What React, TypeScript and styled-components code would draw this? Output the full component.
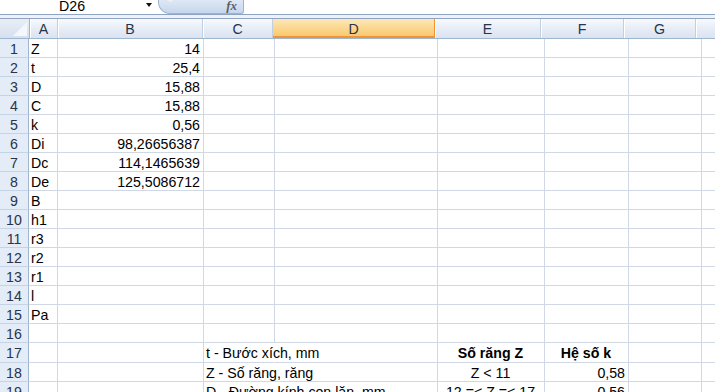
import React from 'react'
import styled, { createGlobalStyle } from 'styled-components'

const GlobalStyle = createGlobalStyle`
    html, body {
        margin: 0;
        padding: 0;
        background: #fff;
        overflow: hidden;
    }
    body {
        font-family: "Liberation Sans", Arial, sans-serif;
    }
`

type Align = 'left' | 'right' | 'center'

interface CellData {
    text?: string
    align?: Align
    bold?: boolean
    spill?: boolean
}

// column widths include the right gridline
const COLS = ['A', 'B', 'C', 'D', 'E', 'F', 'G', 'H']
const COL_WIDTHS = [30, 29, 146, 71, 163, 107, 84, 73, 100]
const SELECTED_COL = 'D'

const L = (text: string): CellData => ({ text, align: 'left' })
const R = (text: string): CellData => ({ text, align: 'right' })

const rows: { height: number; cells: Record<string, CellData> }[] = [
    { height: 19, cells: { A: L('Z'), B: R('14') } },
    { height: 19, cells: { A: L('t'), B: R('25,4') } },
    { height: 19, cells: { A: L('D'), B: R('15,88') } },
    { height: 19, cells: { A: L('C'), B: R('15,88') } },
    { height: 19, cells: { A: L('k'), B: R('0,56') } },
    { height: 19, cells: { A: L('Di'), B: R('98,26656387') } },
    { height: 19, cells: { A: L('Dc'), B: R('114,1465639') } },
    { height: 19, cells: { A: L('De'), B: R('125,5086712') } },
    { height: 19, cells: { A: L('B') } },
    { height: 19, cells: { A: L('h1') } },
    { height: 19, cells: { A: L('r3') } },
    { height: 19, cells: { A: L('r2') } },
    { height: 19, cells: { A: L('r1') } },
    { height: 19, cells: { A: L('l') } },
    { height: 19, cells: { A: L('Pa') } },
    { height: 19, cells: {} },
    {
        height: 20,
        cells: {
            C: { text: 't - Bước xích, mm', align: 'left', spill: true },
            E: { text: 'Số răng Z', align: 'center', bold: true },
            F: { text: 'Hệ số k', align: 'center', bold: true },
        },
    },
    {
        height: 19,
        cells: {
            C: { text: 'Z - Số răng, răng', align: 'left', spill: true },
            E: { text: 'Z < 11', align: 'center' },
            F: R('0,58'),
        },
    },
    {
        height: 19,
        cells: {
            C: { text: 'D - Đường kính con lăn, mm', align: 'left', spill: true },
            E: { text: '12 =< Z =< 17', align: 'center' },
            F: R('0,56'),
        },
    },
]

const App: React.FC = () => {
    return (
        <Window>
            <GlobalStyle />
            <FormulaBar>
                <NameBox>
                    <NameText>D26</NameText>
                    <DropArrow />
                </NameBox>
                <FxPill>
                    <PillKnob />
                    <FxLabel>fx</FxLabel>
                </FxPill>
                <FormulaInput />
            </FormulaBar>
            <Gap />
            <Sheet>
                <HeaderRow>
                    <Corner>
                        <CornerTriangle />
                    </Corner>
                    {COLS.map((c, i) => (
                        <ColHeader key={c} $w={COL_WIDTHS[i + 1]} $selected={c === SELECTED_COL}>
                            {c}
                        </ColHeader>
                    ))}
                    <ColHeader $w={COL_WIDTHS[COL_WIDTHS.length - 1]} $selected={false} />
                </HeaderRow>
                {rows.map((row, r) => (
                    <Row key={r} $h={row.height}>
                        <RowHeader>{r + 1}</RowHeader>
                        {COLS.map((c, i) => {
                            const cell = row.cells[c]
                            return (
                                <Cell
                                    key={c}
                                    $w={COL_WIDTHS[i + 1]}
                                    $align={cell?.align ?? 'left'}
                                    $bold={!!cell?.bold}
                                    $spill={!!cell?.spill}
                                >
                                    {cell?.text}
                                </Cell>
                            )
                        })}
                        <Cell $w={COL_WIDTHS[COL_WIDTHS.length - 1]} $align="left" $bold={false} $spill={false} />
                    </Row>
                ))}
            </Sheet>
        </Window>
    )
}

export default App

const Window = styled.div`
    width: 715px;
    height: 392px;
    overflow: hidden;
    background: #fff;
    display: flex;
    flex-direction: column;
`

const FormulaBar = styled.div`
    height: 14px;
    flex: none;
    display: flex;
    align-items: stretch;
    border-bottom: 1px solid #8ea4c0;
    background: #fff;
`

const NameBox = styled.div`
    width: 158px;
    flex: none;
    position: relative;
    display: flex;
    align-items: center;
`

const NameText = styled.span`
    margin-left: 59px;
    margin-top: -3px;
    font-size: 14.2px;
    color: #000;
`

const DropArrow = styled.div`
    position: absolute;
    left: 146px;
    top: 3px;
    width: 0;
    height: 0;
    border-left: 3.5px solid transparent;
    border-right: 3.5px solid transparent;
    border-top: 4px solid #111;
`

const FxPill = styled.div`
    width: 84px;
    flex: none;
    position: relative;
    margin-top: -12px;
    border: 1px solid #9fb3cd;
    border-top: none;
    border-radius: 0 0 3px 12px;
    background: linear-gradient(to bottom, #eef3fa, #d9e4f3 60%, #c6d6ed);
    display: flex;
    align-items: flex-end;
    justify-content: flex-end;
`

const PillKnob = styled.div`
    position: absolute;
    left: 4px;
    top: 1px;
    width: 13px;
    height: 13px;
    border-radius: 50%;
    background: radial-gradient(circle at 60% 70%, #ffffff, #d6dbe3 55%, #b3bcc8);
`

const FxLabel = styled.span`
    font-family: "Liberation Serif", "Times New Roman", serif;
    font-style: italic;
    font-weight: bold;
    font-size: 13px;
    line-height: 13px;
    color: #5f5f5f;
    margin: 0 6px 1px 0;
`

const FormulaInput = styled.div`
    flex: 1;
    background: #fff;
`

const Gap = styled.div`
    height: 3px;
    flex: none;
    background: #eef2f8;
`

const Sheet = styled.div`
    display: flex;
    flex-direction: column;
    flex: 1;
    font-size: 14.2px;
`

const HeaderRow = styled.div`
    display: flex;
    height: 19px;
    flex: none;
    border-top: 1px solid #8ea4c0;
    border-bottom: 1px solid #9eb6ce;
`

const Corner = styled.div`
    width: 29px;
    flex: none;
    position: relative;
    border-right: 1px solid #9eb6ce;
    background: linear-gradient(to bottom, #e8eef7, #d6e0ee);
`

const CornerTriangle = styled.div`
    position: absolute;
    right: 2px;
    bottom: 2px;
    width: 0;
    height: 0;
    border-left: 14px solid transparent;
    border-bottom: 14px solid #f4f7fb;
`

const ColHeader = styled.div<{ $w: number; $selected: boolean }>`
    width: ${p => p.$w - 1}px;
    flex: none;
    border-right: 1px solid ${p => (p.$selected ? '#f29436' : '#c0cfe1')};
    display: flex;
    align-items: center;
    justify-content: center;
    color: #27344c;
    font-size: 14.2px;
    box-sizing: border-box;
    background: ${p =>
        p.$selected
            ? 'linear-gradient(to bottom, #fde7b8, #fbd58a 55%, #f8c467)'
            : 'linear-gradient(to bottom, #f7f9fd, #e6ecf6 55%, #dbe3f0)'};
    box-shadow: ${p => (p.$selected ? 'inset 0 -2px 0 #f29436' : 'inset 1px 0 0 #ffffff')};
`

const Row = styled.div<{ $h: number }>`
    display: flex;
    height: ${p => p.$h}px;
    flex: none;
`

const RowHeader = styled.div`
    width: 29px;
    flex: none;
    box-sizing: border-box;
    border-right: 1px solid #9eb6ce;
    border-bottom: 1px solid #c5d3e6;
    background: #e4ecf7;
    color: #27344c;
    display: flex;
    align-items: center;
    justify-content: center;
    padding-top: 1px;
`

const Cell = styled.div<{ $w: number; $align: Align; $bold: boolean; $spill: boolean }>`
    width: ${p => p.$w}px;
    flex: none;
    box-sizing: border-box;
    border-right: 1px solid ${p => (p.$spill ? 'transparent' : '#d0d7e5')};
    border-bottom: 1px solid #d0d7e5;
    padding: 1px 3px 0 2px;
    display: flex;
    align-items: center;
    justify-content: ${p =>
        p.$align === 'right' ? 'flex-end' : p.$align === 'center' ? 'center' : 'flex-start'};
    white-space: nowrap;
    overflow: ${p => (p.$spill ? 'visible' : 'hidden')};
    font-weight: ${p => (p.$bold ? 'bold' : 'normal')};
    color: #000;
    position: relative;
    z-index: ${p => (p.$spill ? 1 : 0)};
`
